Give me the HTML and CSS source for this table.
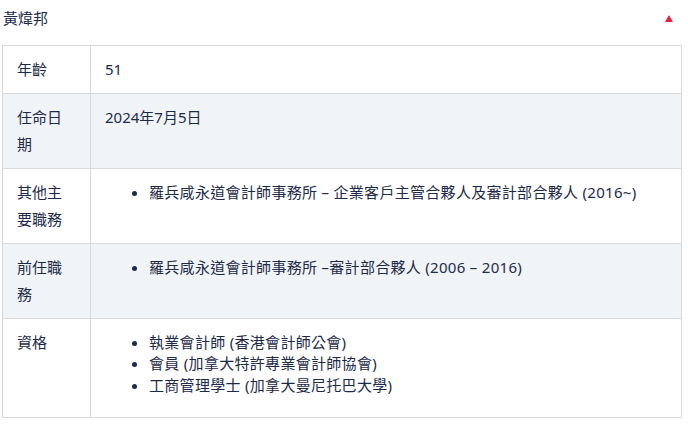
FILE: index.html
```html
<!DOCTYPE html>
<html lang="zh-Hant">
<head>
<meta charset="utf-8">
<title>黃煒邦</title>
<link rel="stylesheet" href="styles.css">
</head>
<body>
<section class="panel">
  <header class="panel-head">
    <h2 class="panel-title">黃煒邦</h2>
    <span class="toggle" aria-label="收起"></span>
  </header>
  <table class="info">
    <colgroup><col class="col-label"><col></colgroup>
    <tbody>
      <tr>
        <th>年齡</th>
        <td>51</td>
      </tr>
      <tr class="alt">
        <th>任命日期</th>
        <td>2024年7月5日</td>
      </tr>
      <tr>
        <th>其他主要職務</th>
        <td><ul><li>羅兵咸永道會計師事務所 – 企業客戶主管合夥人及審計部合夥人 (2016~)</li></ul></td>
      </tr>
      <tr class="alt">
        <th>前任職務</th>
        <td><ul><li>羅兵咸永道會計師事務所 –審計部合夥人 (2006 – 2016)</li></ul></td>
      </tr>
      <tr>
        <th>資格</th>
        <td><ul>
          <li>執業會計師 (香港會計師公會)</li>
          <li>會員 (加拿大特許專業會計師協會)</li>
          <li>工商管理學士 (加拿大曼尼托巴大學)</li>
        </ul></td>
      </tr>
    </tbody>
  </table>
</section>
</body>
</html>
```
FILE: styles.css
```css
html, body {
  margin: 0;
  padding: 0;
  background: #ffffff;
}
body {
  font-family: "Noto Sans", "Noto Sans CJK TC", sans-serif;
  font-size: 15px;
  color: #1d2b4a;
}
.panel {
  padding: 0 2px;
  width: 680px;
}
.panel-head {
  display: flex;
  justify-content: space-between;
  align-items: center;
  height: 37px;
  margin-bottom: 8px;
  padding: 0 9px 0 1px;
}
.panel-title {
  margin: 0;
  font-size: 15px;
  font-weight: 400;
  line-height: 27px;
  color: #1d2b4a;
}
.toggle {
  width: 0;
  height: 0;
  border-left: 4.5px solid transparent;
  border-right: 4.5px solid transparent;
  border-bottom: 7px solid #e3223f;
}
.info {
  width: 680px;
  border-collapse: collapse;
  table-layout: fixed;
}
.col-label {
  width: 88px;
}
.info th,
.info td {
  border: 1px solid #d9d9d9;
  padding: 10px 14px;
  line-height: 27px;
  text-align: left;
  vertical-align: top;
  font-weight: 400;
}
.info tr.alt {
  background: #f1f4f7;
}
.info ul {
  margin: 3px 0 11px;
  padding-left: 44px;
}
.info li {
  line-height: 21.4px;
  letter-spacing: 0.3px;
}
```
